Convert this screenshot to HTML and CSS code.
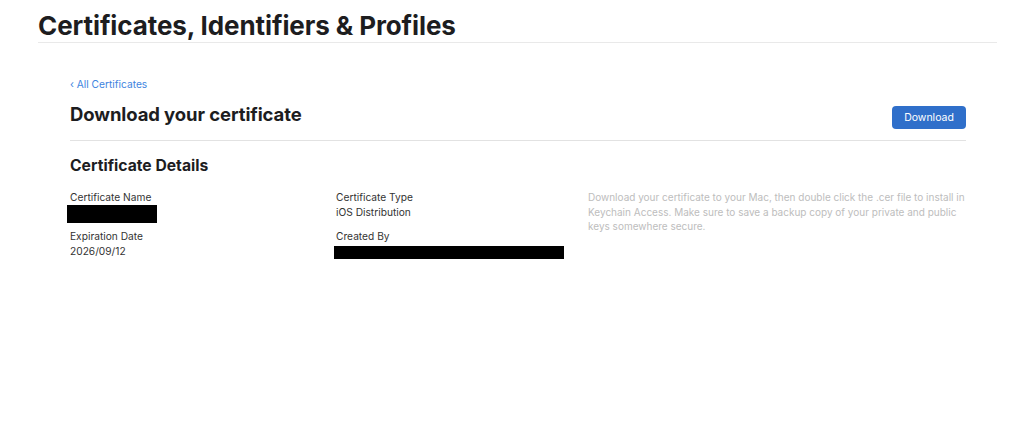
FILE: index.html
```html
<!DOCTYPE html>
<html lang="en">
<head>
<meta charset="utf-8">
<title>Certificates, Identifiers &amp; Profiles</title>
<link rel="stylesheet" href="styles.css">
</head>
<body>
<header class="page-header">
  <h1 class="page-title">Certificates, Identifiers &amp; Profiles</h1>
</header>
<main class="content">
  <a class="back-link" href="#">&lsaquo; All Certificates</a>
  <div class="title-row">
    <h2 class="section-title">Download your certificate</h2>
    <button class="btn-primary" type="button">Download</button>
  </div>
  <h3 class="details-title">Certificate Details</h3>
  <div class="details">
    <div class="field">
      <div class="label">Certificate Name</div>
      <div class="redacted redacted-name"></div>
    </div>
    <div class="field">
      <div class="label">Certificate Type</div>
      <div class="value">iOS Distribution</div>
    </div>
    <p class="help">Download your certificate to your Mac, then double click the .cer file to install in Keychain Access. Make sure to save a backup copy of your private and public keys somewhere secure.</p>
    <div class="field">
      <div class="label">Expiration Date</div>
      <div class="value">2026/09/12</div>
    </div>
    <div class="field">
      <div class="label">Created By</div>
      <div class="redacted redacted-creator"></div>
    </div>
  </div>
</main>
</body>
</html>
```
FILE: styles.css
```css
* { box-sizing: border-box; }
html, body { margin: 0; padding: 0; background: #fff; }
body {
  font-family: Inter, "Noto Sans", "Liberation Sans", sans-serif;
  color: #1d1d1f;
}
.page-header {
  margin: 0 27px 0 38px;
  padding-top: 10px;
  border-bottom: 1px solid #e9e9e9;
}
.page-title {
  margin: 0;
  font-size: 26px;
  font-weight: 700;
  line-height: 32px;
  letter-spacing: -0.1px;
}
.content {
  margin: 0 58px 0 70px;
  padding-top: 34px;
}
.back-link {
  display: block;
  font-size: 10.2px;
  line-height: 14px;
  color: #3e84e0;
  text-decoration: none;
}
.title-row {
  display: flex;
  justify-content: space-between;
  align-items: flex-start;
  margin-top: 11px;
  padding-bottom: 11px;
  border-bottom: 1px solid #e2e2e2;
}
.section-title {
  margin: 0;
  font-size: 18.5px;
  line-height: 24px;
  font-weight: 700;
  letter-spacing: -0.1px;
}
.btn-primary {
  margin-top: 4px;
  height: 23px;
  width: 74px;
  border: none;
  border-radius: 4px;
  background: #2f6fca;
  color: #fff;
  font-family: inherit;
  font-size: 10.5px;
  padding: 0;
}
.details-title {
  margin: 15px 0 0;
  font-size: 15.7px;
  line-height: 20px;
  font-weight: 700;
}
.details {
  display: grid;
  grid-template-columns: 266px 252px 1fr;
  grid-template-rows: 39px auto;
  margin-top: 14px;
}
.field { display: flex; flex-direction: column; }
.label, .value {
  font-size: 10.2px;
  line-height: 14px;
  color: #333;
}
.value { margin-top: 1px; }
.redacted { background: #000; }
.redacted-name { width: 90px; height: 18px; margin-left: -3px; margin-top: 1px; }
.redacted-creator { width: 230px; height: 13px; margin-left: -2px; margin-top: 3px; }
.help {
  grid-column: 3;
  grid-row: 1 / span 2;
  margin: 0;
  font-size: 10px;
  line-height: 14.5px;
  color: #bdbdbd;
  max-width: 390px;
}
```
